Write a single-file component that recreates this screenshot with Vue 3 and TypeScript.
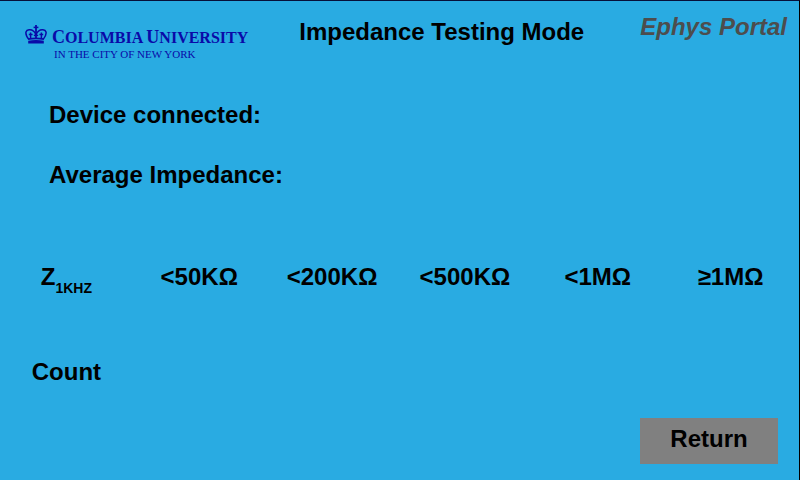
<script setup lang="ts">
interface ImpedanceBand {
  label: string
  count: number | null
}

const device = ''
const averageImpedance = ''

const bands: ImpedanceBand[] = [
  { label: '<50KΩ', count: null },
  { label: '<200KΩ', count: null },
  { label: '<500KΩ', count: null },
  { label: '<1MΩ', count: null },
  { label: '≥1MΩ', count: null },
]
</script>

<template>
  <main class="screen">
    <header class="header">
      <div class="logo">
        <svg class="crown" viewBox="0 0 22 20" aria-hidden="true">
          <g fill="none" stroke="currentColor" stroke-width="1.5">
            <path d="M3.8 14.4C1.6 11.4.5 9 1 7C1.8 4.4 6 4.2 8.2 5.8C10 7 10.6 8.6 10.8 10" />
            <path d="M18.2 14.4C20.4 11.4 21.5 9 21 7C20.2 4.4 16 4.2 13.8 5.8C12 7 11.4 8.6 11.2 10" />
            <path d="M11 0V14" stroke-width="1.8" />
            <path d="M8.6 2.4H13.4" />
            <path d="M5.6 7.4V13.4M3.8 9.6H7.6M16.4 7.4V13.4M14.4 9.6H18.2" />
            <path d="M8.8 10.4H13.2" />
          </g>
          <path d="M3.2 13.2Q11 11.8 18.8 13.2V15Q11 13.6 3.2 15Z" fill="currentColor" />
          <path d="M3.2 15.8Q11 14.4 18.8 15.8V18.6H3.2Z" fill="currentColor" />
        </svg>
        <div class="wordmark">
          <span class="name"><span class="initial">C</span>OLUMBIA <span class="initial">U</span>NIVERSITY</span>
          <span class="place">IN THE CITY OF NEW YORK</span>
        </div>
      </div>
      <h1 class="title">Impedance Testing Mode</h1>
      <p class="portal">Ephys Portal</p>
    </header>

    <dl class="summary">
      <div class="entry">
        <dt>Device connected:</dt>
        <dd>{{ device }}</dd>
      </div>
      <div class="entry">
        <dt>Average Impedance:</dt>
        <dd>{{ averageImpedance }}</dd>
      </div>
    </dl>

    <table class="bands">
      <thead>
        <tr>
          <th scope="col">Z<sub>1KHZ</sub></th>
          <th v-for="band in bands" :key="band.label" scope="col">{{ band.label }}</th>
        </tr>
      </thead>
      <tbody>
        <tr>
          <th scope="row">Count</th>
          <td v-for="band in bands" :key="band.label">{{ band.count }}</td>
        </tr>
      </tbody>
    </table>

    <footer class="footer">
      <button type="button" class="return">Return</button>
    </footer>
  </main>
</template>

<style>
body {
  background: #29abe2;
}
</style>

<style scoped>
.screen {
  box-sizing: border-box;
  display: flex;
  flex-direction: column;
  min-height: 100vh;
  border-top: 1px solid #06103a;
  border-right: 1px solid #000;
  background: #29abe2;
  color: #000;
  font: bold 24px/28px "Liberation Sans", Arial, sans-serif;
}

.header {
  display: flex;
  align-items: flex-start;
  padding: 12px 12px 0 25px;
}

.logo {
  display: flex;
  gap: 5px;
  padding-top: 12px;
  color: #0a0aa8;
}

.crown {
  width: 22px;
  height: 20px;
}

.wordmark {
  display: flex;
  flex-direction: column;
  font-family: "Liberation Serif", "Times New Roman", serif;
  font-weight: normal;
  white-space: nowrap;
}

.name {
  font-size: 16px;
  font-weight: bold;
  line-height: 24px;
}

.initial {
  font-size: 18px;
}

.place {
  padding-left: 2px;
  font-size: 11px;
  line-height: 12px;
  margin-top: -2px;
}

.title {
  margin: 5px 0 0 51px;
  font-size: 24px;
  line-height: 28px;
}

.portal {
  margin: 0 0 0 auto;
  color: #4d4d4d;
  font-style: italic;
}

.summary {
  display: grid;
  gap: 32px;
  margin: 0;
  padding: 41px 49px 0;
}

.entry {
  display: flex;
  gap: 12px;
}

.entry dd {
  margin: 0;
}

.bands {
  width: 100%;
  margin-top: 74px;
  padding-right: 2px;
  border-spacing: 0;
  table-layout: fixed;
}

.bands th,
.bands td {
  height: 28px;
  padding: 0;
  text-align: center;
  vertical-align: top;
}

.bands tbody th,
.bands tbody td {
  padding-top: 63px;
}

.bands sub {
  font-size: 14px;
  line-height: 14px;
  vertical-align: -8px;
}

.footer {
  display: flex;
  justify-content: flex-end;
  margin-top: auto;
  padding: 0 21px 16px;
}

.return {
  width: 138px;
  height: 46px;
  padding: 0 0 4px;
  border: 0;
  background: #808080;
  color: #000;
  font: inherit;
  cursor: pointer;
}
</style>
